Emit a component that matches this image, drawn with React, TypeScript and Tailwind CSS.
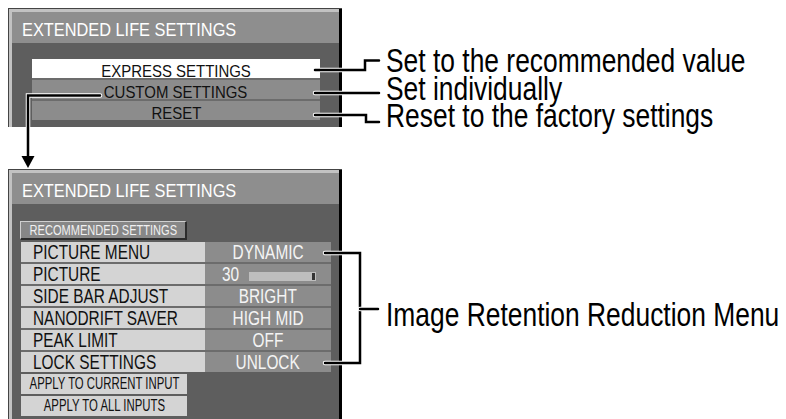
import React from "react";

const rows = [
  { label: "PICTURE MENU", value: "DYNAMIC" },
  { label: "PICTURE", value: "30", slider: true },
  { label: "SIDE BAR ADJUST", value: "BRIGHT" },
  { label: "NANODRIFT SAVER", value: "HIGH MID" },
  { label: "PEAK LIMIT", value: "OFF" },
  { label: "LOCK SETTINGS", value: "UNLOCK" },
];

const Panel = ({ className, children }: { className: string; children: React.ReactNode }) => (
  <div className={"flex w-[334px] shrink-0 border-t border-l border-[#444444] " + className}>
    <div className="flex flex-1 flex-col border-t-[3px] border-l-[3px] border-[#c2c2c2] bg-[#5e5e5e]">
      <div className="h-[31px] shrink-0 bg-[#8e8e8e] pl-[10px] pt-[8px] text-[19px] leading-[19px] text-white">
        <span className="inline-block origin-left scale-x-[0.86] whitespace-nowrap">EXTENDED LIFE SETTINGS</span>
      </div>
      {children}
    </div>
    <div className="w-[3px] shrink-0 bg-black" />
  </div>
);

const TopButton = ({ label, white }: { label: string; white?: boolean }) => (
  <div
    className={
      "flex h-[19px] justify-center pt-[4px] text-[17px] leading-[17px] text-[#111111] " +
      (white ? "bg-white" : "bg-[#8c8c8c]")
    }
  >
    <span className="inline-block scale-x-[0.88] whitespace-nowrap">{label}</span>
  </div>
);

const ApplyButton = ({ label }: { label: string }) => (
  <div className="flex h-[20px] w-[166px] items-center justify-center bg-[#d4d4d4] text-[16px] leading-[16px] text-[#111111]">
    <span className="inline-block scale-x-[0.71] whitespace-nowrap">{label}</span>
  </div>
);

const Line = ({ d }: { d: string }) => (
  <>
    <path d={d} fill="none" stroke="white" strokeWidth={4.5} strokeLinecap="round" />
    <path d={d} fill="none" stroke="black" strokeWidth={2.5} strokeLinecap="round" />
  </>
);

const Label = ({ text, className }: { text: string; className?: string }) => (
  <div className={"h-[27.5px] text-[33px] leading-[27.5px] text-black " + (className ?? "")}>
    <span className="inline-block origin-left scale-x-[0.8] whitespace-nowrap">{text}</span>
  </div>
);

export default function App() {
  return (
    <div className="relative flex h-[419px] w-[786px] overflow-hidden bg-white font-['Liberation_Sans',Arial,sans-serif]">
      <div className="flex w-[342px] shrink-0 flex-col pl-[8px] pt-[8px]">
        <Panel className="h-[119px]">
          <div className="pl-[20px] pt-[16px]">
            <div className="flex w-[288px] flex-col gap-[2px] bg-[#6c6c6c]">
              <TopButton label="EXPRESS SETTINGS" white />
              <TopButton label="CUSTOM SETTINGS" />
              <TopButton label="RESET" />
            </div>
          </div>
        </Panel>

        <Panel className="mt-[42px] h-[260px]">
          <div className="flex flex-col pl-[8px] pt-[17px]">
            <div className="flex h-[19px] w-[167px] items-center justify-center border-t border-l border-[#cfcfcf] border-r-2 border-b-2 border-r-[#2c2c2c] border-b-[#2c2c2c] bg-[#878787] text-[14px] leading-[14px] text-[#f0f0f0]">
              <span className="inline-block scale-x-[0.79] whitespace-nowrap">RECOMMENDED SETTINGS</span>
            </div>
            <div className="ml-[1px] mt-[2px] flex w-[310px] flex-col gap-[2px] bg-[#6c6c6c]">
              {rows.map((r) => (
                <div key={r.label} className="flex h-[20px] text-[20px] leading-[20px]">
                  <div className="w-[184px] bg-[#d4d4d4] pl-[12px] text-[#111111]">
                    <span className="inline-block origin-left scale-x-[0.77] whitespace-nowrap">{r.label}</span>
                  </div>
                  {r.slider ? (
                    <div className="flex flex-1 bg-[#8c8c8c] pl-[17px] text-[#f4f4f4]">
                      <div className="w-[27px]">
                        <span className="inline-block origin-left scale-x-[0.77] whitespace-nowrap">{r.value}</span>
                      </div>
                      <div className="mt-[8px] flex h-[9px] w-[67px] items-center justify-end bg-[#bebebe] pr-[1px]">
                        <div className="h-[7px] w-[3px] bg-[#333333]" />
                      </div>
                    </div>
                  ) : (
                    <div className="flex flex-1 justify-center bg-[#8c8c8c] text-[#f4f4f4]">
                      <span className="inline-block scale-x-[0.77] whitespace-nowrap">{r.value}</span>
                    </div>
                  )}
                </div>
              ))}
            </div>
            <div className="ml-[1px] mt-[2px] flex flex-col gap-[2px]">
              <ApplyButton label="APPLY TO CURRENT INPUT" />
              <ApplyButton label="APPLY TO ALL INPUTS" />
            </div>
          </div>
        </Panel>
      </div>

      <div className="flex flex-col pl-[44px] pt-[47px]">
        <Label text="Set to the recommended value" />
        <Label text="Set individually" />
        <Label text="Reset to the factory settings" />
        <Label text="Image Retention Reduction Menu" className="mt-[171px]" />
      </div>

      <svg className="pointer-events-none absolute inset-0" width="786" height="419" viewBox="0 0 786 419">
        <Line d="M315 70 H365 V60.5 H379" />
        <Line d="M315 93 H379" />
        <Line d="M315 115 H366 V122 H379" />
        <Line d="M100 95.5 H28 V158" />
        <polygon points="21.5,156 34.5,156 28,168" fill="black" />
        <Line d="M325 253 H360 V363 H325" />
        <Line d="M360 309 H378" />
      </svg>
    </div>
  );
}
